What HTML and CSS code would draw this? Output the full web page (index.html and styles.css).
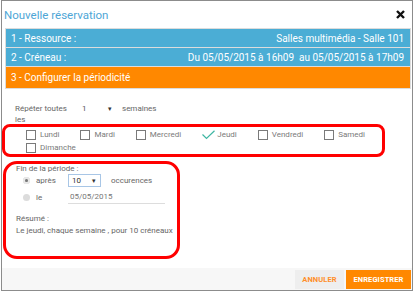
FILE: index.html
```html
<!DOCTYPE html>
<html lang="fr">
<head>
    <meta charset="UTF-8">
    <title>Nouvelle réservation</title>
    <link rel="stylesheet" href="styles.css">
</head>
<body>
    <div class="dialog">
        <div class="dialog-header">
            <span class="dialog-title">Nouvelle réservation</span>
            <svg class="close-btn" width="9" height="9" viewBox="0 0 9 9">
                <path d="M1 1 L8 8 M8 1 L1 8" stroke="#111" stroke-width="2.4"/>
            </svg>
        </div>

        <div class="steps">
            <div class="step done">
                <span>1 - Ressource :</span>
                <span>Salles multimédia - Salle 101</span>
            </div>
            <div class="step done">
                <span>2 - Créneau :</span>
                <span>Du 05/05/2015 à 16h09&nbsp; au 05/05/2015 à 17h09</span>
            </div>
            <div class="step current">
                <span>3 - Configurer la périodicité</span>
            </div>
        </div>

        <div class="dialog-body">
            <div class="repeat-row">
                <span class="repeat-label">Répéter toutes</span>
                <span class="repeat-select">1 <span class="caret">&#9662;</span></span>
                <span>semaines</span>
            </div>
            <div class="les">les</div>

            <div class="days">
                <label class="day"><span class="box"></span>Lundi</label>
                <label class="day"><span class="box"></span>Mardi</label>
                <label class="day"><span class="box"></span>Mercredi</label>
                <label class="day checked">
                    <svg class="tick" width="13" height="10" viewBox="0 0 13 10">
                        <path d="M0.5 4.5 L4.5 8.5 L12.5 0.8" fill="none" stroke="#3fb6a2" stroke-width="1.2"/>
                    </svg>Jeudi
                </label>
                <label class="day"><span class="box"></span>Vendredi</label>
                <label class="day"><span class="box"></span>Samedi</label>
                <label class="day"><span class="box"></span>Dimanche</label>
            </div>

            <div class="period">
                <div class="period-title">Fin de la période :</div>
                <div class="period-row">
                    <span class="radio on"></span>
                    <span class="radio-label">après</span>
                    <span class="count-select">10 <span class="caret">&#9662;</span></span>
                    <span class="unit">occurences</span>
                </div>
                <div class="period-row date-row">
                    <span class="radio"></span>
                    <span class="radio-label">le</span>
                    <span class="date-input">05/05/2015</span>
                </div>
                <div class="summary-title">Résumé :</div>
                <div class="summary">Le jeudi, chaque semaine , pour 10 créneaux</div>
            </div>
        </div>

        <div class="dialog-footer">
            <button class="btn cancel">Annuler</button>
            <button class="btn save">Enregistrer</button>
        </div>
    </div>
</body>
</html>
```

FILE: styles.css
```css
body {
    margin: 0;
    background: #fff;
    font-family: Roboto, 'Liberation Sans', sans-serif;
}

.dialog {
    box-sizing: border-box;
    width: 412px;
    height: 291px;
    margin-left: 1px;
    border: 1px solid #8c8c8c;
    background: #fff;
    display: flex;
    flex-direction: column;
}

.dialog-header {
    display: flex;
    justify-content: space-between;
    align-items: center;
    height: 27px;
    padding: 0 7px 0 2px;
}

.dialog-title {
    color: #4ea6d6;
    font-size: 11.5px;
}

.steps {
    margin: 0 1px 0 3px;
}

.step {
    display: flex;
    justify-content: space-between;
    align-items: center;
    height: 18px;
    padding: 0 6px 0 5px;
    border: 1px solid #dcdcdc;
    border-top: none;
    color: #fff;
    font-size: 10px;
}

.step:first-child {
    border-top: 1px solid #dcdcdc;
}

.step.done {
    background: #4badd5;
}

.step.current {
    background: #ff8800;
    height: 21px;
}

.dialog-body {
    flex: 1;
    padding-top: 13px;
    color: #666;
    font-size: 8px;
}

.repeat-row {
    display: flex;
    align-items: center;
    height: 12px;
    padding-left: 13px;
}

.repeat-label {
    width: 67px;
}

.repeat-select {
    width: 40px;
    color: #555;
}

.caret {
    margin-left: 20px;
    font-size: 7px;
    color: #333;
}

.les {
    height: 12px;
    line-height: 12px;
    padding-left: 13px;
}

.days {
    display: flex;
    flex-wrap: wrap;
    column-gap: 21px;
    width: 383px;
    height: 33px;
    box-sizing: border-box;
    margin: -2px 0 0 0;
    padding: 1px 0 0 21px;
    border: 3px solid #f00;
    border-radius: 8px;
}

.day {
    display: flex;
    align-items: center;
    gap: 4px;
    height: 13px;
    color: #7a7a7a;
}

.box {
    width: 8px;
    height: 8px;
    border: 1px solid #7a7a7a;
}

.tick {
    margin-right: -2px;
}

.period {
    box-sizing: border-box;
    width: 177px;
    height: 98px;
    margin: 4px 0 0 1px;
    padding: 0 0 0 10px;
    border: 3px solid #f00;
    border-radius: 14px;
}

.period-title {
    height: 10px;
    line-height: 10px;
}

.period-row {
    display: flex;
    align-items: center;
    height: 13px;
    padding-left: 7px;
}

.date-row {
    height: 18px;
    margin-top: 1px;
}

.radio {
    width: 7px;
    height: 7px;
    border-radius: 50%;
    background: #dcdcdc;
    margin-right: 6px;
    position: relative;
}

.radio.on {
    background: #d0d0d0;
    box-shadow: inset 0 0 0 2px #e8e8e8;
}

.radio.on::after {
    content: '';
    position: absolute;
    left: 2px;
    top: 2px;
    width: 3px;
    height: 3px;
    border-radius: 50%;
    background: #777;
}

.radio-label {
    width: 32px;
}

.count-select {
    box-sizing: border-box;
    width: 33px;
    height: 13px;
    line-height: 11px;
    padding-left: 3px;
    border: 1px solid #a8c6e6;
    color: #333;
}

.count-select .caret {
    margin-left: 9px;
}

.unit {
    margin-left: 10px;
}

.date-input {
    box-sizing: border-box;
    width: 97px;
    height: 14px;
    line-height: 14px;
    padding-left: 2px;
    border-bottom: 1px solid #ddd;
    color: #777;
}

.summary-title {
    margin-top: 7px;
    height: 12px;
    line-height: 12px;
}

.summary {
    height: 12px;
    line-height: 12px;
}

.dialog-footer {
    display: flex;
    justify-content: flex-end;
    gap: 2px;
    height: 22px;
    padding: 2px 1px 0 0;
    box-sizing: border-box;
    background: #f7f7f7;
}

.btn {
    height: 19px;
    border: none;
    font-family: Roboto, 'Liberation Sans', sans-serif;
    font-size: 7.5px;
    font-weight: bold;
    text-transform: uppercase;
    letter-spacing: 0.1px;
    padding: 0;
}

.btn.cancel {
    width: 49px;
    background: #eeeeee;
    color: #ff8f2a;
}

.btn.save {
    width: 65px;
    background: #ff8800;
    color: #fff;
}
```
